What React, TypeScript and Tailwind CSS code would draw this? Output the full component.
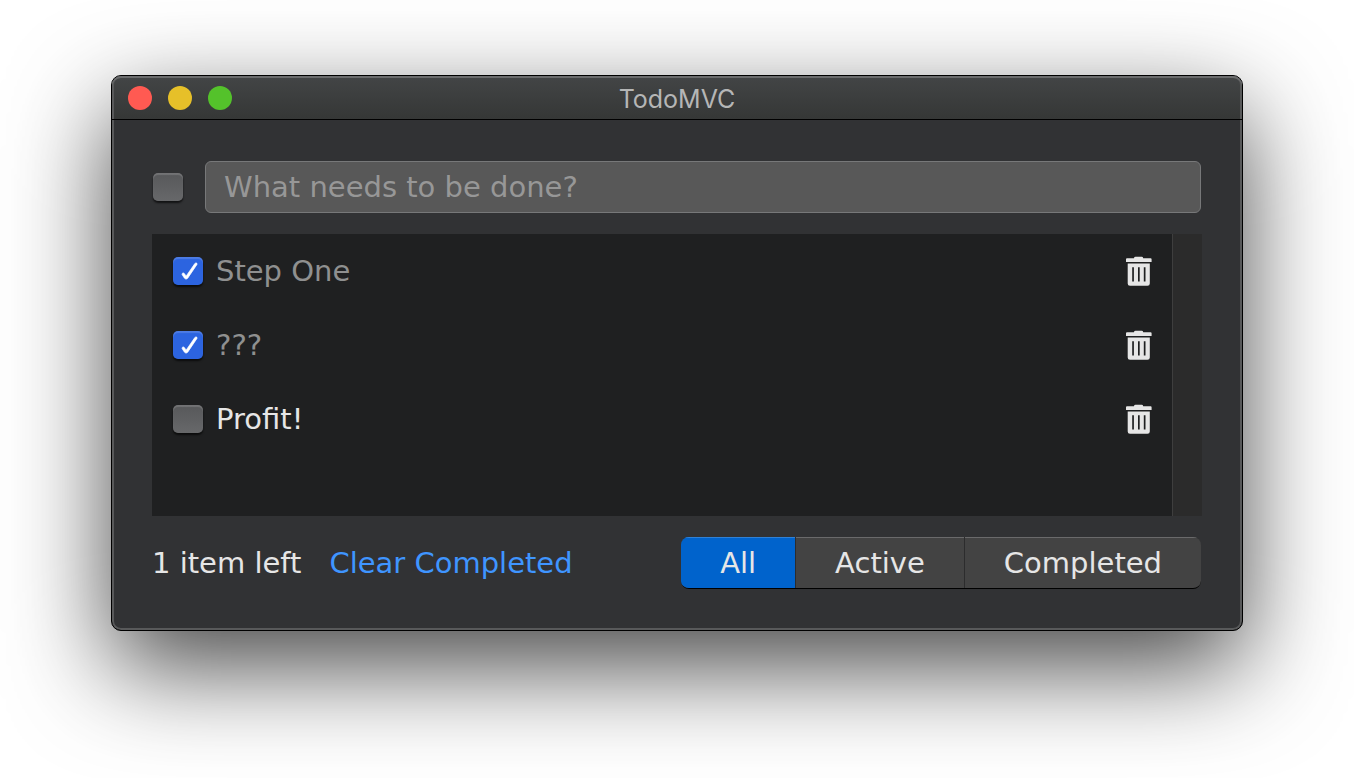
import { useState } from "react";

type Filter = "All" | "Active" | "Completed";
type Todo = { id: number; text: string; done: boolean };

const FILTERS: Filter[] = ["All", "Active", "Completed"];

const INITIAL: Todo[] = [
  { id: 1, text: "Step One", done: true },
  { id: 2, text: "???", done: true },
  { id: 3, text: "Profit!", done: false },
];

function CheckBox({
  id,
  label,
  checked,
  onChange,
}: {
  id: string;
  label?: string;
  checked: boolean;
  onChange: () => void;
}) {
  return (
    <span className="grid size-8 shrink-0 place-items-center">
      <input
        id={id}
        type="checkbox"
        aria-label={label}
        checked={checked}
        onChange={onChange}
        className="col-start-1 row-start-1 h-7 w-[30px] appearance-none rounded-[5px] bg-linear-to-b from-[#57585a] to-[#67686a] shadow-[inset_0_2px_1px_rgba(255,255,255,0.16),0_2px_2px_rgba(0,0,0,0.65)] checked:from-[#2c64e0] checked:to-[#2c64e0]"
      />
      {checked && (
        <svg viewBox="0 0 30 30" className="pointer-events-none z-10 col-start-1 row-start-1 size-[30px]" aria-hidden="true">
          <path
            d="M9.200 17.600C9.700 16.700 11 16.800 11.500 17.700L13.100 20.200L21.800 7.600C22.600 6.500 24.600 7 24 8.400L14.700 22.200C13.900 23.300 12.300 23.300 11.500 22.200L9.400 19.100C9 18.500 8.900 18.100 9.200 17.600Z"
            fill="#fff"
            stroke="#fff"
            strokeWidth="0.7"
            strokeLinejoin="round"
          />
        </svg>
      )}
    </span>
  );
}

function TrashIcon() {
  return (
    <svg viewBox="0 0 26 32" className="h-8 w-[26px]" aria-hidden="true">
      <path
        fillRule="evenodd"
        fill="#e6e6e6"
        d="M8 3Q8.200 1.800 9.500 1.800H15.700Q17 1.800 17.200 3.200H24.600Q25.600 3.200 25.600 4.200V7H0V4.200Q0 3.200 1 3.200H8ZM1.700 8.600H23.800V28.500Q23.800 30.800 21.500 30.800H4Q1.700 30.800 1.700 28.500ZM6.200 12.200V26.500H7.900V12.200ZM12 12.200V26.500H13.700V12.200ZM17.800 12.200V26.500H19.500V12.200Z"
      />
    </svg>
  );
}

export default function App() {
  const [todos, setTodos] = useState<Todo[]>(INITIAL);
  const [filter, setFilter] = useState<Filter>("All");
  const [draft, setDraft] = useState("");

  const left = todos.filter((t) => !t.done).length;
  const allDone = todos.length > 0 && left === 0;
  const visible = todos.filter((t) => filter === "All" || (filter === "Completed") === t.done);

  const toggle = (id: number) => setTodos(todos.map((t) => (t.id === id ? { ...t, done: !t.done } : t)));

  const add = () => {
    if (!draft.trim()) return;
    setTodos([...todos, { id: Date.now(), text: draft.trim(), done: false }]);
    setDraft("");
  };

  return (
    <div className="min-h-screen overflow-hidden bg-white px-[111px] pt-[75px] pb-36 font-['DejaVu_Sans',sans-serif] text-[29px] leading-8 text-[#e6e6e6]">
      <main className="rounded-[10px] border border-black bg-[#313234] shadow-[inset_0_0_0_2px_#58595a,0_36px_100px_rgba(0,0,0,0.72)]">
        <header className="grid h-11 grid-cols-[1fr_auto_1fr] items-center rounded-t-[9px] border-b border-black bg-linear-to-b from-[#434546] to-[#353736] px-4 shadow-[inset_0_2px_0_#6b6c6d,inset_2px_0_0_#58595a,inset_-2px_0_0_#58595a]">
          <div className="flex gap-4">
            <button type="button" aria-label="Close" className="size-6 rounded-full bg-[#ff5a52]" />
            <button type="button" aria-label="Minimize" className="size-6 rounded-full bg-[#e6c029]" />
            <button type="button" aria-label="Zoom" className="size-6 rounded-full bg-[#54c22b]" />
          </div>
          <h1 className="pt-0.5 font-['Inter',sans-serif] text-[25px] text-[#b5b6b6]">TodoMVC</h1>
        </header>

        <div className="flex flex-col gap-5 p-10">
          <form
            className="flex items-center gap-5"
            onSubmit={(e) => {
              e.preventDefault();
              add();
            }}
          >
            <CheckBox
              id="toggle-all"
              label="Mark all as complete"
              checked={allDone}
              onChange={() => setTodos(todos.map((t) => ({ ...t, done: !allDone })))}
            />
            <input
              type="text"
              aria-label="New todo"
              placeholder="What needs to be done?"
              value={draft}
              onChange={(e) => setDraft(e.target.value)}
              className="m-px h-[52px] min-w-0 flex-1 rounded-md border border-[#777879] bg-[#585858] px-[18px] outline-none placeholder:text-[#979797]"
            />
          </form>

          <div className="flex min-h-[282px] bg-[#1f2021]">
            <ul className="min-w-0 flex-1 px-5">
              {visible.map((t) => (
                <li key={t.id} className="flex h-[74px] items-center gap-3">
                  <CheckBox id={`todo-${t.id}`} checked={t.done} onChange={() => toggle(t.id)} />
                  <label htmlFor={`todo-${t.id}`} className={t.done ? "flex-1 text-[#8f9090]" : "flex-1"}>
                    {t.text}
                  </label>
                  <button
                    type="button"
                    aria-label={`Delete ${t.text}`}
                    onClick={() => setTodos(todos.filter((o) => o.id !== t.id))}
                  >
                    <TrashIcon />
                  </button>
                </li>
              ))}
            </ul>
            <div className="w-[30px] border-l border-[#3e3e3e] bg-[#2b2b2b]" />
          </div>

          <footer className="flex h-[54px] items-center">
            <span>{left} item left</span>
            <button
              type="button"
              className="ml-7 text-[#3f95ff]"
              onClick={() => setTodos(todos.filter((t) => !t.done))}
            >
              Clear Completed
            </button>
            <div className="mr-px ml-auto flex overflow-hidden rounded-lg border-b border-black bg-[#434343]">
              {FILTERS.map((f) => (
                <button
                  key={f}
                  type="button"
                  aria-pressed={filter === f}
                  onClick={() => setFilter(f)}
                  className={
                    filter === f
                      ? "h-[51px] bg-[#0063cc] px-[39px] shadow-[inset_0_1px_0_#3081d5]"
                      : "h-[51px] border-l border-[#2c2c2d] px-[39px] shadow-[inset_0_1px_0_#6a6a6b]"
                  }
                >
                  {f}
                </button>
              ))}
            </div>
          </footer>
        </div>
      </main>
    </div>
  );
}
